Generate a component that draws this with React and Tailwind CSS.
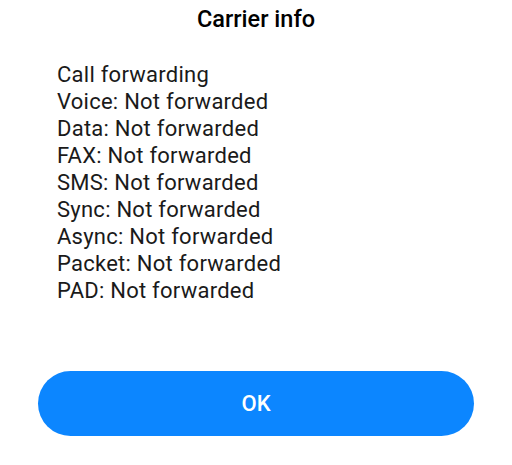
import React from "react";

const lines = [
  "Call forwarding",
  "Voice: Not forwarded",
  "Data: Not forwarded",
  "FAX: Not forwarded",
  "SMS: Not forwarded",
  "Sync: Not forwarded",
  "Async: Not forwarded",
  "Packet: Not forwarded",
  "PAD: Not forwarded",
];

export default function App() {
  return (
    <div className="w-[512px] h-[465px] bg-white flex flex-col" style={{ fontFamily: "Roboto, sans-serif" }}>
      <h1 className="pt-[5px] text-center text-[23.5px] leading-[28px] font-medium text-black">Carrier info</h1>
      <div className="pl-[57px] pt-[28px] text-[22px] leading-[27px] tracking-[0.25px] text-[#1a1a1a]">
        {lines.map((l) => (
          <div key={l}>{l}</div>
        ))}
      </div>
      <div className="px-[38px] pt-[67px]">
        <button className="w-full h-[65px] rounded-full bg-[#0c86ff] text-white text-[22px] font-medium">OK</button>
      </div>
    </div>
  );
}
